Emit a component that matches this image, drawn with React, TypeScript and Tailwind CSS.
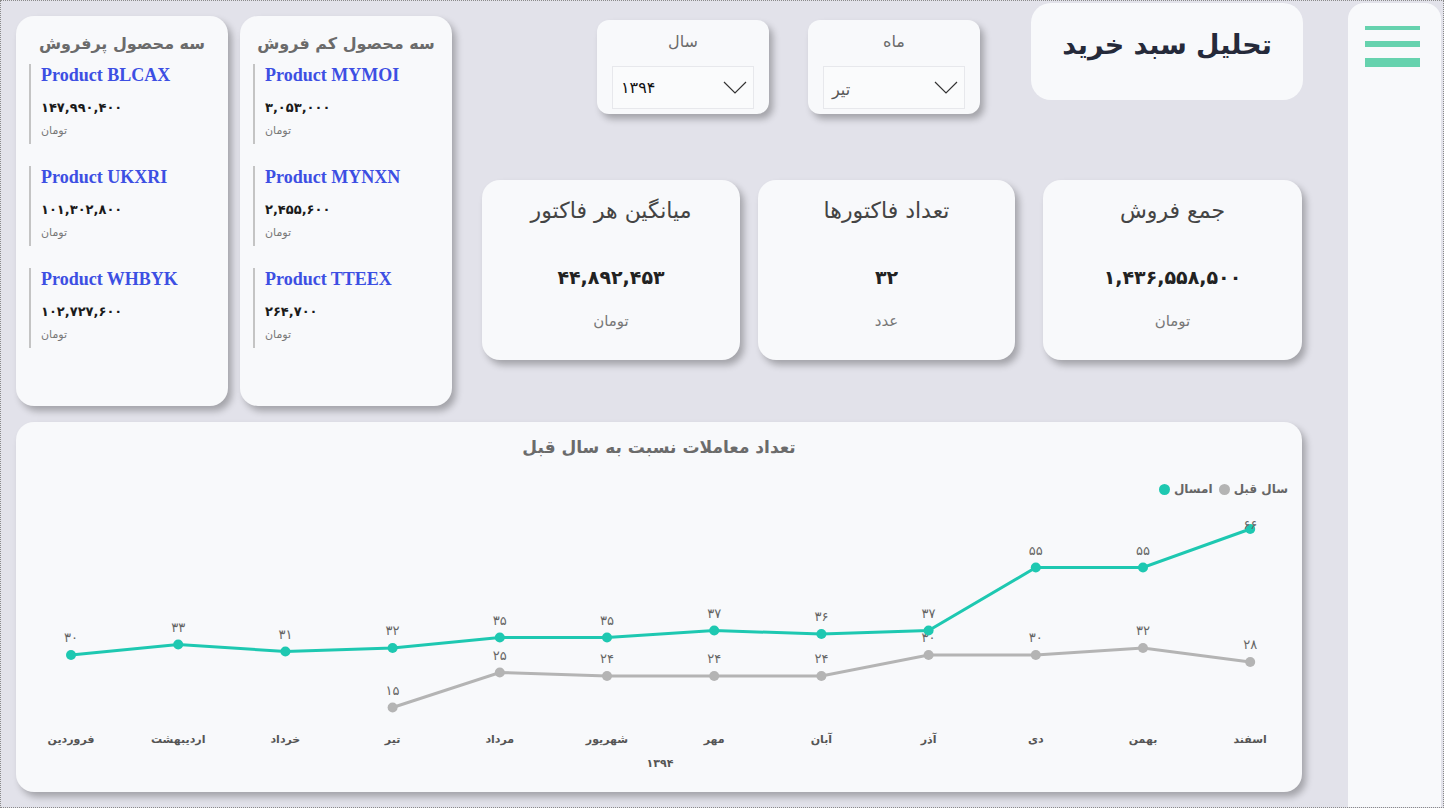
import React from "react";

const fa = (s: string | number) => String(s).replace(/\d/g, (d) => "۰۱۲۳۴۵۶۷۸۹"[Number(d)]);

const months = ["فروردین", "اردیبهشت", "خرداد", "تیر", "مرداد", "شهریور", "مهر", "آبان", "آذر", "دی", "بهمن", "اسفند"];
const thisYear = [30, 33, 31, 32, 35, 35, 37, 36, 37, 55, 55, 66];
const lastYear: (number | null)[] = [null, null, null, 15, 25, 24, 24, 24, 30, 30, 32, 28];

const px = (i: number) => 71 + i * 107.2;
const py = (v: number) => 759 - 3.5 * v;

const best = [
  { name: "Product BLCAX", value: "147,990,400" },
  { name: "Product UKXRI", value: "101,302,800" },
  { name: "Product WHBYK", value: "102,727,600" },
];
const worst = [
  { name: "Product MYMOI", value: "3,053,000" },
  { name: "Product MYNXN", value: "2,455,600" },
  { name: "Product TTEEX", value: "264,700" },
];

const fontFa = "font-['DejaVu_Sans',sans-serif]";
const shadow = "shadow-[4px_5px_7px_rgba(0,0,0,0.28)]";

const ProductCard = ({ title, items }: { title: string; items: { name: string; value: string }[] }) => (
  <div className={`flex h-[390px] w-[212px] flex-col rounded-[18px] bg-[#f8f9fb] pt-[19px] ${shadow}`}>
    <div dir="rtl" className={`text-center text-[16px] leading-[18px] font-bold text-[#6b6b6b] ${fontFa}`}>
      {title}
    </div>
    <div className="mt-[11px] flex flex-col gap-[22px] pl-[13px]">
      {items.map((it) => (
        <div key={it.name} className="flex h-[80px] flex-col border-l-2 border-[#c4c4c4] pl-[10px]">
          <div className="mt-[1px] font-['Liberation_Serif',serif] text-[18px] leading-[20px] font-bold text-[#3d4fe3]">
            {it.name}
          </div>
          <div className={`mt-[14px] text-[13px] leading-[18px] font-bold text-[#1a1a1a] ${fontFa}`}>{fa(it.value)}</div>
          <div dir="rtl" className={`mt-[7px] self-start text-[11px] leading-[14px] text-[#777] ${fontFa}`}>
            تومان
          </div>
        </div>
      ))}
    </div>
  </div>
);

const Select = ({ label, value, muted }: { label: string; value: string; muted?: boolean }) => (
  <div className={`flex h-[94px] w-[172px] flex-col items-center rounded-[12px] bg-[#f8f9fb] pt-[12px] ${shadow}`}>
    <div className={`text-[16px] leading-[20px] text-[#6b6b6b] ${fontFa}`}>{label}</div>
    <div className="mt-[14px] flex h-[43px] w-[142px] items-center justify-between border border-[#e7e8ec] bg-[#fafbfc] pr-[6px] pl-[8px]">
      <span className={`text-[16px] ${muted ? "mt-[4px] text-[#555]" : "text-[#111]"} ${fontFa}`}>{value}</span>
      <svg width="24" height="14" viewBox="0 0 24 14" fill="none" stroke="#333" strokeWidth="1.2">
        <path d="M1 1l11 11L23 1" />
      </svg>
    </div>
  </div>
);

const Kpi = ({ title, value, unit, w }: { title: string; value: string; unit: string; w: string }) => (
  <div className={`flex h-[180px] ${w} flex-col items-center rounded-[18px] bg-[#f8f9fb] pt-[16px] ${shadow}`}>
    <div dir="rtl" className={`text-[22px] leading-[30px] text-[#444] ${fontFa}`}>{title}</div>
    <div className={`mt-[38px] text-[19px] leading-[26px] font-bold text-[#222] ${fontFa}`}>{fa(value)}</div>
    <div className={`mt-[20px] text-[15px] leading-[22px] text-[#777] ${fontFa}`}>{unit}</div>
  </div>
);

const Chart = () => {
  const teal = thisYear.map((v, i) => `${px(i)},${py(v)}`).join(" ");
  const grayPts = lastYear
    .map((v, i) => (v === null ? null : `${px(i)},${py(v)}`))
    .filter(Boolean)
    .join(" ");
  return (
    <svg width="1286" height="290" viewBox="16 500 1286 290" className="mt-[4px] block shrink-0">
      <polyline points={grayPts} fill="none" stroke="#b4b4b4" strokeWidth="3" />
      <polyline points={teal} fill="none" stroke="#1ec8b1" strokeWidth="3" />
      {lastYear.map((v, i) =>
        v === null ? null : (
          <g key={"g" + i}>
            <circle cx={px(i)} cy={py(v)} r="5" fill="#b4b4b4" />
            <text x={px(i)} y={py(v) - 13} textAnchor="middle" fontSize="13" fill="#666" fontFamily="DejaVu Sans">
              {fa(v)}
            </text>
          </g>
        )
      )}
      {thisYear.map((v, i) => (
        <g key={"t" + i}>
          <circle cx={px(i)} cy={py(v)} r="5" fill="#1ec8b1" />
          <text
            x={px(i)}
            y={Math.max(py(v) - 13, 528)}
            textAnchor="middle"
            fontSize="13"
            fill="#666"
            fontFamily="DejaVu Sans"
          >
            {fa(v)}
          </text>
        </g>
      ))}
      {months.map((m, i) => (
        <text
          key={m}
          x={px(i)}
          y={742}
          textAnchor="middle"
          fontSize="11"
          fontWeight="bold"
          fill="#555"
          fontFamily="DejaVu Sans"
        >
          {m}
        </text>
      ))}
      <text x={660} y={766} textAnchor="middle" fontSize="11" fontWeight="bold" fill="#555" fontFamily="DejaVu Sans">
        {fa(1394)}
      </text>
    </svg>
  );
};

export default function App() {
  return (
    <div className="flex h-[808px] w-[1444px] overflow-hidden border border-dotted border-[#8a8a8a] bg-[#e2e2ea]">
      <div className="flex w-[1302px] flex-col pl-[15px]">
        <div className="flex h-[405px] pt-[2px]">
          <div className="mt-[13px] flex gap-[12px]">
            <ProductCard title="سه محصول پرفروش" items={best} />
            <ProductCard title="سه محصول کم فروش" items={worst} />
          </div>
          <div className="ml-[30px] flex flex-1 flex-col">
            <div className="flex items-start">
              <div className="mt-[17px] ml-[115px]">
                <Select label="سال" value={fa(1394)} />
              </div>
              <div className="mt-[17px] ml-[39px]">
                <Select label="ماه" value="تیر" muted />
              </div>
              <div className="ml-[51px] flex h-[97px] w-[272px] justify-center rounded-[20px] bg-[#f8f9fb] pt-[22px]">
                <div dir="rtl" className={`text-[27px] leading-[40px] font-bold text-[#252a3a] ${fontFa}`}>
                  تحلیل سبد خرید
                </div>
              </div>
            </div>
            <div className="mt-[66px] flex">
              <Kpi title="میانگین هر فاکتور" value="44,892,453" unit="تومان" w="w-[258px]" />
              <div className="ml-[18px]">
                <Kpi title="تعداد فاکتورها" value="32" unit="عدد" w="w-[257px]" />
              </div>
              <div className="ml-[28px]">
                <Kpi title="جمع فروش" value="1,436,558,500" unit="تومان" w="w-[259px]" />
              </div>
            </div>
          </div>
        </div>
        <div className={`mt-[16px] flex h-[370px] w-[1286px] flex-col rounded-[18px] bg-[#f8f9fb] pt-[12px] ${shadow}`}>
          <div dir="rtl" className={`text-center text-[17px] leading-[26px] font-bold text-[#6b6b6b] ${fontFa}`}>
            تعداد معاملات نسبت به سال قبل
          </div>
          <div className="mt-[21px] flex h-[16px] shrink-0 items-center justify-end gap-[4px] pr-[14px]">
            <span className="h-[11px] w-[11px] rounded-full bg-[#1ec8b1]" />
            <span className={`text-[12px] font-bold text-[#666] ${fontFa}`}>امسال</span>
            <span className="ml-[2px] h-[11px] w-[11px] rounded-full bg-[#b4b4b4]" />
            <span className={`text-[12px] font-bold text-[#666] ${fontFa}`}>سال قبل</span>
          </div>
          <Chart />
        </div>
      </div>
      <div className="mt-[2px] ml-[45px] flex h-[820px] w-[93px] flex-col items-center rounded-t-[16px] bg-[#f8f9fb] pt-[23px]">
        <div className="-ml-[4px] flex w-[55px] flex-col">
          <div className="h-[4px] bg-[#66d2ae]" />
          <div className="mt-[11px] h-[6px] bg-[#66d2ae]" />
          <div className="mt-[11px] h-[9px] bg-[#66d2ae]" />
        </div>
      </div>
    </div>
  );
}
